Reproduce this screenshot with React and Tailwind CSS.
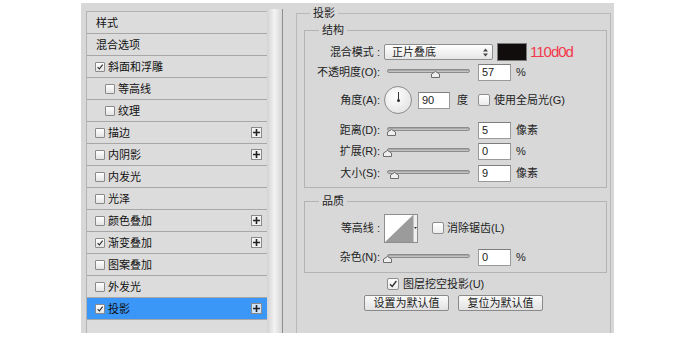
import React from 'react';

const LAYERS = [
  { name: '样式', head: true },
  { name: '混合选项', head: true },
  { name: '斜面和浮雕', check: true },
  { name: '等高线', sub: true },
  { name: '纹理', sub: true },
  { name: '描边', plus: true },
  { name: '内阴影', plus: true },
  { name: '内发光' },
  { name: '光泽' },
  { name: '颜色叠加', plus: true },
  { name: '渐变叠加', check: true, plus: true },
  { name: '图案叠加' },
  { name: '外发光' },
  { name: '投影', check: true, plus: true, active: true },
];

const Tick = ({ size = 10 }) => (
  <svg width={size} height={size} viewBox="0 0 10 10" className="absolute left-0 top-0">
    <path d="M2 5.2 L4.2 7.4 L8.4 2" fill="none" stroke="#2a2a2a" strokeWidth="1.3" />
  </svg>
);

const SmallCheck = ({ on }) => (
  <span className="relative w-[10px] h-[10px] shrink-0 border border-[#8a8a8a] rounded-[1px] bg-gradient-to-b from-[#ffffff] to-[#e4e4e4]">
    {on && <Tick size={8} />}
  </span>
);

const PlusBtn = ({ active }) => (
  <span className={`w-[11px] h-[11px] ml-auto flex items-center justify-center border border-[#8a8a8a] ${active ? 'bg-[#cfe4fb]' : 'bg-[#f2f2f2]'}`}>
    <svg width="7" height="7" viewBox="0 0 7 7">
      <path d="M3.5 0 V7 M0 3.5 H7" stroke="#222" strokeWidth="1.6" />
    </svg>
  </span>
);

const LayerRow = ({ item }) => (
  <div
    className={`flex items-center h-[22px] pr-[5px] border-b border-[#a7a7a7] text-[11px] leading-[14px] text-[#111] ${
      item.active ? 'bg-[#3a97f7]' : 'bg-[#dcdcdc]'
    } ${item.head ? 'pl-[9px]' : item.sub ? 'pl-[18px]' : 'pl-[8px]'}`}
  >
    {!item.head && <SmallCheck on={item.check} />}
    <span className={item.head ? '' : 'ml-[3px]'}>{item.name}</span>
    {item.plus && <PlusBtn active={item.active} />}
  </div>
);

const Slider = ({ thumb }) => (
  <div className="relative w-[83px] h-[14px] ml-[7px] shrink-0">
    <div className="absolute left-0 right-0 top-[4px] h-[4px] rounded-full border border-[#8c8c8c] bg-gradient-to-b from-[#9c9c9c] to-[#d0d0d0]" />
    <svg width="9" height="7" viewBox="0 0 9 7" className="absolute top-[6px]" style={{ left: thumb }}>
      <path d="M0.5 6.5 V3 L4.5 0.5 L8.5 3 V6.5 Z" fill="#efefef" stroke="#6c6c6c" strokeWidth="1" />
    </svg>
  </div>
);

const Field = ({ value, w = 'w-[33px]', ml = 'ml-[8px]' }) => (
  <div className={`${w} ${ml} h-[17px] shrink-0 bg-white border border-[#9a9a9a] border-t-[#7d7d7d] pl-[3px] text-[11px] leading-[15px] text-[#1c1c1c]`}>
    {value}
  </div>
);

const Label = ({ children }) => (
  <div className="w-[75px] shrink-0 text-right text-[11px] leading-[14px] text-[#1e1e1e]">{children}</div>
);

const SliderRow = ({ label, thumb, value, unit, mt }) => (
  <div className={`flex items-center h-[20px] ${mt}`}>
    <Label>{label}</Label>
    <Slider thumb={thumb} />
    <Field value={value} />
    <span className="ml-[5px] text-[11px] leading-[14px] text-[#1e1e1e]">{unit}</span>
  </div>
);

const Box = ({ on }) => (
  <span className="relative w-[12px] h-[12px] shrink-0 border border-[#8e8e8e] rounded-[2px] bg-gradient-to-b from-[#ffffff] to-[#ececec]">
    {on && <Tick size={10} />}
  </span>
);

const Button = ({ children }) => (
  <div className="w-[85px] h-[16px] flex items-center justify-center border border-[#8a8a8a] rounded-[2px] bg-gradient-to-b from-[#fafafa] to-[#e2e2e2] text-[11px] leading-[14px] text-[#1a1a1a]">
    {children}
  </div>
);

export default function App() {
  return (
    <div className="w-[690px] h-[364px] bg-white pt-[3px] pl-[81px] font-[family-name:Liberation_Sans,Noto_Sans_CJK_SC,sans-serif]">
      <div className="w-[533px] h-[330px] bg-[#d8d8d8] flex">
        {/* layer style list */}
        <div className="flex pt-[8px] pl-[5px]">
          <div className="w-[181px] flex flex-col bg-[#dcdcdc] border-l border-t border-[#b3b3b3]">
            {LAYERS.map((item) => (
              <LayerRow key={item.name} item={item} />
            ))}
          </div>
          <div className="w-[16px] -mt-[2px] border-r border-[#8f8f8f] bg-gradient-to-r from-[#d2d2d2] via-[#f3f3f3] to-[#d6d6d6]" />
        </div>

        {/* drop shadow settings */}
        <div className="flex-1 flex flex-col pt-[3px] pl-[13px] pr-[3px]">
          <fieldset className="flex-1 border border-b-0 border-[#b9b9b9]">
            <legend className="ml-[13px] px-[3px] text-[11px] leading-[14px] text-[#1e1e1e]">投影</legend>

            <fieldset className="mt-[3px] ml-[7px] mr-[3px] pb-[4px] border border-[#b3b3b3]">
              <legend className="ml-[14px] px-[3px] text-[11px] leading-[14px] text-[#1e1e1e]">结构</legend>

              <div className="flex items-center h-[18px] mt-[6px]">
                <Label>混合模式 :</Label>
                <div className="ml-[4px] w-[109px] h-[16px] flex items-center pl-[7px] pr-[4px] border border-[#8e8e8e] rounded-[2px] bg-gradient-to-b from-[#ffffff] to-[#e6e6e6] text-[11px] leading-[14px] text-[#1a1a1a]">
                  <span>正片叠底</span>
                  <svg width="5" height="9" viewBox="0 0 5 9" className="ml-auto">
                    <path d="M0 3.5 L2.5 0.5 L5 3.5 Z M0 5.5 L2.5 8.5 L5 5.5 Z" fill="#444" />
                  </svg>
                </div>
                <div className="ml-[4px] w-[30px] h-[18px] bg-[#110d0d] border border-[#7a7a7a]" />
                <span className="ml-[3px] text-[15px] leading-[18px] tracking-[-1px] text-[#f2384c]">110d0d</span>
              </div>

              <SliderRow label="不透明度(O):" thumb={44} value="57" unit="%" mt="mt-[1px]" />

              <div className="flex items-center h-[30px] mt-[3px]">
                <Label>角度(A):</Label>
                <div className="relative ml-[4px] w-[28px] h-[28px] shrink-0 rounded-full border border-[#8c8c8c] bg-[radial-gradient(circle_at_40%_35%,#ffffff,#dcdcdc)]">
                  <div className="absolute left-[12.5px] top-[5px] w-[1px] h-[8px] bg-[#333]" />
                  <div className="absolute left-[11.5px] top-[11.5px] w-[3px] h-[3px] rounded-full bg-[#333]" />
                </div>
                <Field value="90" w="w-[32px]" ml="ml-[6px]" />
                <span className="ml-[7px] text-[11px] leading-[14px] text-[#1e1e1e]">度</span>
                <span className="ml-[10px] flex items-center">
                  <Box />
                </span>
                <span className="ml-[4px] text-[11px] leading-[14px] text-[#1e1e1e]">使用全局光(G)</span>
              </div>

              <SliderRow label="距离(D):" thumb={0} value="5" unit="像素" mt="mt-[5px]" />
              <SliderRow label="扩展(R):" thumb={-4} value="0" unit="%" mt="mt-[1px]" />
              <SliderRow label="大小(S):" thumb={3} value="9" unit="像素" mt="mt-[2px]" />
            </fieldset>

            <fieldset className="mt-[6px] ml-[7px] mr-[3px] pb-[6px] border border-[#b3b3b3]">
              <legend className="ml-[14px] px-[3px] text-[11px] leading-[14px] text-[#1e1e1e]">品质</legend>

              <div className="flex items-center h-[30px] mt-[5px]">
                <Label>等高线 :</Label>
                <div className="ml-[4px] w-[34px] h-[29px] flex border border-[#8e8e8e] bg-white">
                  <svg width="28" height="27" viewBox="0 0 28 27" className="shrink-0">
                    <path d="M0 27 L28 0 L28 27 Z" fill="#9b9b9b" />
                  </svg>
                  <div className="flex-1 flex items-center justify-center border-l border-[#c4c4c4] bg-[#efefef]">
                    <svg width="3" height="2" viewBox="0 0 3 2">
                      <path d="M0 0 H3 L1.5 2 Z" fill="#333" />
                    </svg>
                  </div>
                </div>
                <span className="ml-[14px] flex items-center">
                  <Box />
                </span>
                <span className="ml-[3px] text-[11px] leading-[14px] text-[#1e1e1e]">消除锯齿(L)</span>
              </div>

              <div className="flex items-center h-[18px] mt-[5px]">
                <Label>杂色(N):</Label>
                <Slider thumb={-4} />
                <Field value="0" />
                <span className="ml-[5px] text-[11px] leading-[14px] text-[#1e1e1e]">%</span>
              </div>
            </fieldset>

            <div className="flex items-center h-[14px] mt-[4px] pl-[90px]">
              <Box on />
              <span className="ml-[4px] text-[11px] leading-[14px] text-[#1e1e1e]">图层挖空投影(U)</span>
            </div>

            <div className="flex justify-center gap-[9px] mt-[4px]">
              <Button>设置为默认值</Button>
              <Button>复位为默认值</Button>
            </div>
          </fieldset>
        </div>
      </div>
    </div>
  );
}
